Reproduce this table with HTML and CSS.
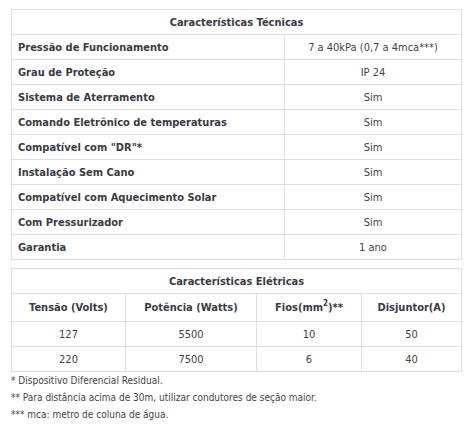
FILE: index.html
```html
<!DOCTYPE html>
<html lang="pt-BR">
<head>
<meta charset="utf-8">
<link rel="stylesheet" href="styles.css">
</head>
<body>
<div class="wrap">
  <table class="spec">
    <colgroup><col class="c-label"><col class="c-value"></colgroup>
    <tr><th colspan="2" class="title">Características Técnicas</th></tr>
    <tr><th class="label">Pressão de Funcionamento</th><td>7 a 40kPa (0,7 a 4mca***)</td></tr>
    <tr><th class="label">Grau de Proteção</th><td>IP 24</td></tr>
    <tr><th class="label">Sistema de Aterramento</th><td>Sim</td></tr>
    <tr><th class="label">Comando Eletrônico de temperaturas</th><td>Sim</td></tr>
    <tr><th class="label">Compatível com "DR"*</th><td>Sim</td></tr>
    <tr><th class="label">Instalação Sem Cano</th><td>Sim</td></tr>
    <tr><th class="label">Compatível com Aquecimento Solar</th><td>Sim</td></tr>
    <tr><th class="label">Com Pressurizador</th><td>Sim</td></tr>
    <tr><th class="label">Garantia</th><td>1 ano</td></tr>
  </table>

  <table class="elec">
    <colgroup><col class="c1"><col class="c2"><col class="c3"><col class="c4"></colgroup>
    <tr><th colspan="4" class="title">Características Elétricas</th></tr>
    <tr class="cols"><th>Tensão (Volts)</th><th>Potência (Watts)</th><th>Fios(mm<sup>2</sup>)**</th><th>Disjuntor(A)</th></tr>
    <tr><td>127</td><td>5500</td><td>10</td><td>50</td></tr>
    <tr><td>220</td><td>7500</td><td>6</td><td>40</td></tr>
  </table>

  <div class="notes">
    <p>* Dispositivo Diferencial Residual.</p>
    <p>** Para distância acima de 30m, utilizar condutores de seção maior.</p>
    <p>*** mca: metro de coluna de água.</p>
  </div>
</div>
</body>
</html>
```

FILE: styles.css
```css
html, body {
  margin: 0;
  padding: 0;
  background: #ffffff;
}
body {
  font-family: "DejaVu Sans Condensed", "DejaVu Sans", Verdana, sans-serif;
  font-size: 11px;
  color: #444444;
}
.wrap {
  padding: 9px 0 0 11px;
  width: 450px;
}
table {
  border-collapse: collapse;
  width: 450px;
  table-layout: fixed;
}
.c-label { width: 273px; }
.c-value { width: 177px; }
.c1 { width: 114px; }
.c2 { width: 131px; }
.c3 { width: 105px; }
.c4 { width: 100px; }
th, td {
  border: 1px solid #e0e0e0;
  padding: 0 6px;
  height: 24px;
  vertical-align: middle;
}
th {
  font-weight: bold;
  color: #3a3a44;
}
td {
  text-align: center;
  font-weight: normal;
}
.title {
  text-align: center;
}
.label {
  text-align: left;
}
.spec {
  margin-bottom: 8px;
}
.elec .cols th {
  height: 27px;
  text-align: center;
}
sup {
  font-size: 8px;
  line-height: 0;
}
.notes {
  font-size: 10px;
}
.notes p {
  margin: 0;
  line-height: 17px;
}
```
